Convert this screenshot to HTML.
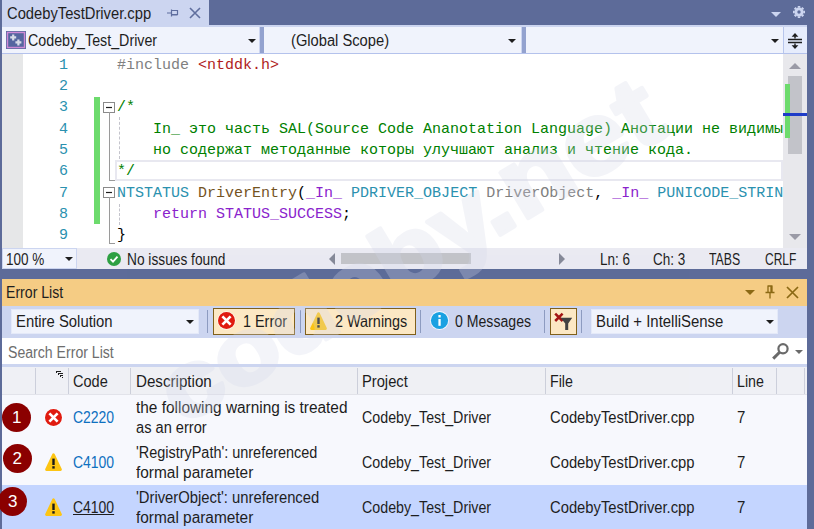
<!DOCTYPE html>
<html>
<head>
<meta charset="utf-8">
<style>
*{box-sizing:border-box;margin:0;padding:0}
html,body{width:814px;height:529px;overflow:hidden;background:#5d6b99}
body{position:relative;font-family:"Liberation Sans",sans-serif;font-size:16px;color:#1e1e1e}
.abs{position:absolute}
.t{position:absolute;white-space:nowrap;line-height:20px;transform-origin:0 50%}
#tab{left:2px;top:0;width:207px;height:26px;background:#ccd5f0}
#nav{left:2px;top:25px;width:805px;height:29px;background:#ccd5f0;border-bottom:1px solid #b4c2ec}
.dd{position:absolute;top:2px;height:26px;background:#f0f3fc}
#ed{left:2px;top:54px;width:781px;height:194px;background:#fff;overflow:hidden}
#gut{left:0;top:0;width:21px;height:194px;background:#e6e7e8}
.ln{position:absolute;left:46px;width:20px;text-align:right;font-family:"Liberation Mono",monospace;font-size:15px;color:#2b91af;line-height:21px;white-space:nowrap}
.cl{position:absolute;left:115px;font-family:"Liberation Mono",monospace;font-size:15px;line-height:21px;white-space:pre;color:#000}
.g{color:#008000}.gr{color:#808080}.r{color:#b01c1c}.b{color:#2b91af}.p{color:#8a22cc}.m{color:#8a22cc}.pa{color:#808080}.fn{color:#74531f}
#vs{left:783px;top:54px;width:24px;height:194px;background:#e8e8ec}
#st{left:2px;top:248px;width:805px;height:21px;background:#eaeaf2}
#elh{left:2px;top:279px;width:805px;height:27px;background:#f5cc84}
#tb{left:2px;top:306px;width:805px;height:33px;background:#ccd5f0}
#sr{left:2px;top:338px;width:805px;height:26px;background:#fff}
#ch{left:2px;top:364px;width:805px;height:31px;background:#eff0f5;border-top:3px solid #ccd5f0;border-bottom:1px solid #e2e3ea}
#rows{left:2px;top:395px;width:805px;height:134px;background:#f7f8fd}
.row{position:absolute;left:0;width:805px;height:45px}
.sel{background:#c4d5ff}
.circ{position:absolute;width:29px;height:29px;border-radius:15px;background:#8b0000;color:#fff;text-align:center;line-height:29px;font-size:17px}
.btn{position:absolute;top:2px;height:27px;background:#fce8c4;border:1px solid #80601c}
.sep{position:absolute;top:4px;width:1px;height:23px;background:#8e9bc0}
.cs{position:absolute;top:1px;width:1px;height:26px;background:#cccfdb}
.arr{position:absolute;width:0;height:0;border-left:4px solid transparent;border-right:4px solid transparent;border-top:4px solid #1e1e1e}
</style>
</head>
<body>
<div class="arr" style="left:771px;top:12px;border-left-width:5px;border-right-width:5px;border-top:5px solid #ccd5f0"></div>
<svg class="abs" style="left:792px;top:5px" width="14" height="14" viewBox="0 0 14 14"><g fill="none" stroke="#ccd5f0"><circle cx="7" cy="7" r="3.1" stroke-width="2.8"/><path d="M11.20 7.00L13.00 7.00M9.97 9.97L11.24 11.24M7.00 11.20L7.00 13.00M4.03 9.97L2.76 11.24M2.80 7.00L1.00 7.00M4.03 4.03L2.76 2.76M7.00 2.80L7.00 1.00M9.97 4.03L11.24 2.76" stroke-width="2.5"/></g></svg>
<div id="tab" class="abs"><span class="t" style="left:5px;top:4px;transform:scaleX(0.9206);">CodebyTestDriver.cpp</span>
<svg class="abs" style="left:165px;top:8px" width="12" height="10" viewBox="0 0 12 10"><path d="M0 5H4M4.5 1.5V8.5M4.5 2.5H10.5V6.5H4.5M4.5 7H10.5" fill="none" stroke="#5f6e9e" stroke-width="1.2"/></svg>
<svg class="abs" style="left:187px;top:7px" width="12" height="12" viewBox="0 0 12 12"><path d="M1 1L11 11M11 1L1 11" stroke="#5f6e9e" stroke-width="1.6"/></svg>
</div>
<div id="nav" class="abs">
<div class="dd" style="left:0;width:257px"><span class="t" style="left:26px;top:4px;transform:scaleX(0.8906);">Codeby_Test_Driver</span><div class="arr" style="left:246px;top:12px"></div>
<svg class="abs" style="left:4px;top:4px" width="20" height="18" viewBox="0 0 20 18"><rect x="0" y="0" width="20" height="18" fill="#5b6aa0"/><rect x="1.5" y="1.5" width="17" height="15" fill="#5566a0" stroke="#cf8ad6" stroke-width="1.4"/><path d="M7.2 3.4v6M4.2 6.4h6" stroke="#d8dce8" stroke-width="2.2"/><path d="M12.4 8.4v6M9.4 11.4h6" stroke="#d8dce8" stroke-width="2.2"/></svg></div>
<div class="abs" style="left:258px;top:2px;width:4px;height:26px;background:#93a2cf"></div>
<div class="dd" style="left:262px;width:257px"><span class="t" style="left:27px;top:4px;transform:scaleX(0.9187);">(Global Scope)</span><div class="arr" style="left:244px;top:12px"></div></div>
<div class="abs" style="left:520px;top:2px;width:4px;height:26px;background:#93a2cf"></div>
<div class="dd" style="left:524px;width:257px"><div class="arr" style="left:245px;top:12px"></div></div>
<div class="abs" style="left:781px;top:2px;width:24px;height:26px;background:#e6ecfc;border-left:1px solid #b8c6ec"></div>
<svg class="abs" style="left:785px;top:8px" width="16" height="17" viewBox="0 0 16 17"><path d="M1 6.4H15M1 9.6H15" stroke="#1e1e1e" stroke-width="1.5"/><path d="M8 2V5.5M8 10.5V14" stroke="#1e1e1e" stroke-width="1.4"/><path d="M4.6 3.8L8 0L11.4 3.8ZM4.6 12.2L8 16L11.4 12.2Z" fill="#1e1e1e"/></svg>
</div>
<div id="ed" class="abs"><div id="gut" class="abs"></div>
<div class="abs" style="left:92px;top:43px;width:6px;height:127px;background:#6ddb6d"></div>
<div class="abs" style="left:113px;top:106px;width:668px;height:21px;border:2px solid #e8e8f0"></div>
<div class="ln" style="top:1px">1</div>
<div class="ln" style="top:22px">2</div>
<div class="ln" style="top:43px">3</div>
<div class="ln" style="top:65px">4</div>
<div class="ln" style="top:86px">5</div>
<div class="ln" style="top:107px">6</div>
<div class="ln" style="top:129px">7</div>
<div class="ln" style="top:150px">8</div>
<div class="ln" style="top:171px">9</div>
<div class="cl" style="top:1px"><span class="gr">#include </span><span class="r">&lt;ntddk.h&gt;</span></div>
<div class="cl" style="top:22px"></div>
<div class="cl" style="top:43px"><span class="g">/*</span></div>
<div class="cl" style="top:65px"><span class="g">    In_ это часть SAL(Source Code Ananotation Language) Анотации не видимы</span></div>
<div class="cl" style="top:86px"><span class="g">    но содержат методанные которы улучшают анализ и чтение кода.</span></div>
<div class="cl" style="top:107px"><span class="g">*/</span></div>
<div class="cl" style="top:129px"><span class="b">NTSTATUS</span> <span class="fn">DriverEntry</span>(<span class="m">_In_</span> <span class="b">PDRIVER_OBJECT</span> <span class="pa">DriverObject</span>, <span class="m">_In_</span> <span class="b">PUNICODE_STRING</span></div>
<div class="cl" style="top:150px">    <span class="p">return</span> <span class="m">STATUS_SUCCESS</span>;</div>
<div class="cl" style="top:171px">}</div>
<svg class="abs" style="left:101px;top:48px" width="12" height="11" viewBox="0 0 12 11"><rect x="0.5" y="0.5" width="11" height="10" fill="#fff" stroke="#8a8a8a"/><path d="M3 5.5H9" stroke="#1e1e1e" stroke-width="1.2"/></svg>
<svg class="abs" style="left:101px;top:133px" width="12" height="11" viewBox="0 0 12 11"><rect x="0.5" y="0.5" width="11" height="10" fill="#fff" stroke="#8a8a8a"/><path d="M3 5.5H9" stroke="#1e1e1e" stroke-width="1.2"/></svg>
<div class="abs" style="left:107px;top:58px;width:1px;height:69px;background:#9a9a9a"></div>
<div class="abs" style="left:107px;top:126px;width:6px;height:1px;background:#9a9a9a"></div>
<div class="abs" style="left:107px;top:143px;width:1px;height:47px;background:#9a9a9a"></div>
<div class="abs" style="left:107px;top:189px;width:6px;height:1px;background:#9a9a9a"></div>
<div class="abs" style="left:117px;top:63px;width:0;height:42px;border-left:1px dashed #c4c4cc"></div>
<div class="abs" style="left:117px;top:150px;width:0;height:21px;border-left:1px dashed #c4c4cc"></div>
</div>
<div id="vs" class="abs">
<div class="abs" style="left:5px;top:22px;width:14px;height:78px;background:#c2c3c9"></div>
<div class="abs" style="left:2px;top:30px;width:5px;height:54px;background:#6ddb6d"></div>
<div class="abs" style="left:0;top:59px;width:24px;height:3px;background:#1e3cc8"></div>
<div class="abs" style="left:6px;top:9px;width:0;height:0;border-left:6px solid transparent;border-right:6px solid transparent;border-bottom:6px solid #9a9aa6"></div>
<div class="abs" style="left:6px;top:180px;width:0;height:0;border-left:6px solid transparent;border-right:6px solid transparent;border-top:6px solid #9a9aa6"></div>
</div>
<div id="st" class="abs">
<div class="abs" style="left:0;top:0;width:75px;height:21px;background:#f0f3fc;border:1px solid #ccd5f0"></div>
<span class="t" style="left:4px;top:2px;transform:scaleX(0.8438);">100 %</span><div class="arr" style="left:63px;top:9px"></div>
<svg class="abs" style="left:105px;top:4px" width="14" height="14" viewBox="0 0 14 14"><circle cx="7" cy="7" r="7" fill="#2ea043"/><path d="M3.5 7.2L6 9.7L10.5 4.6" fill="none" stroke="#fff" stroke-width="1.8"/></svg>
<span class="t" style="left:125px;top:2px;transform:scaleX(0.8578);">No issues found</span>
<div class="abs" style="left:339px;top:5px;width:130px;height:11px;background:#c2c3c9"></div>
<div class="abs" style="left:327px;top:5px;width:0;height:0;border-top:6px solid transparent;border-bottom:6px solid transparent;border-right:6px solid #868999"></div>
<div class="abs" style="left:557px;top:5px;width:0;height:0;border-top:6px solid transparent;border-bottom:6px solid transparent;border-left:6px solid #868999"></div>
<span class="t" style="left:598px;top:2px;transform:scaleX(0.8438);">Ln: 6</span><span class="t" style="left:651px;top:2px;transform:scaleX(0.8438);">Ch: 3</span><span class="t" style="left:707px;top:2px;transform:scaleX(0.7687);">TABS</span><span class="t" style="left:763px;top:2px;transform:scaleX(0.75);">CRLF</span>
</div>
<div id="elh" class="abs"><span class="t" style="left:4px;top:4px;transform:scaleX(0.8812);">Error List</span>
<div class="arr" style="left:743px;top:11px;border-left-width:5px;border-right-width:5px;border-top:5px solid #8b6914"></div>
<svg class="abs" style="left:763px;top:6px" width="10" height="14" viewBox="0 0 10 14"><path d="M2.5 1H7.5M3 1V7M7 1V7M6 1V7M0.5 7.5H9.5M5 8V13.5" fill="none" stroke="#8b6914" stroke-width="1.3"/></svg>
<svg class="abs" style="left:784px;top:7px" width="13" height="13" viewBox="0 0 13 13"><path d="M1 1L12 12M12 1L1 12" stroke="#8b6914" stroke-width="1.7"/></svg>
</div>
<div id="tb" class="abs">
<div class="abs" style="left:9px;top:3px;width:188px;height:25px;background:#f0f3fc;border:1px solid #e4e9f8"></div><span class="t" style="left:14px;top:6px;transform:scaleX(0.9281);">Entire Solution</span><div class="arr" style="left:184px;top:14px"></div>
<div class="sep" style="left:205px"></div>
<div class="btn" style="left:211px;width:82px"></div><svg class="abs" style="left:215px;top:5px" width="19" height="19" viewBox="0 0 19 19"><circle cx="9.5" cy="9.5" r="9.3" fill="#fff" opacity="0.75"/><circle cx="9.5" cy="9.5" r="8.5" fill="#e01b10"/><path d="M5.4 5.4L13.6 13.6M13.6 5.4L5.4 13.6" stroke="#fff" stroke-width="2.7"/></svg><span class="t" style="left:241px;top:6px;transform:scaleX(0.9);">1 Error</span>
<div class="sep" style="left:298px"></div>
<div class="btn" style="left:303px;width:111px"></div><svg class="abs" style="left:307px;top:5px" width="19" height="20" viewBox="0 0 19 20"><path d="M9.5 2.6L16.6 17.6H2.4Z" fill="#fdc514" stroke="#fdc514" stroke-width="2.6" stroke-linejoin="round"/><rect x="8.3" y="6.6" width="2.4" height="6.4" fill="#1a1a1a"/><rect x="8.3" y="14.2" width="2.4" height="2.4" fill="#1a1a1a"/></svg><span class="t" style="left:333px;top:6px;transform:scaleX(0.9);">2 Warnings</span>
<div class="sep" style="left:418px"></div>
<svg class="abs" style="left:428px;top:5px" width="19" height="19" viewBox="0 0 19 19"><circle cx="9.5" cy="9.5" r="9.5" fill="#fff" opacity="0.8"/><circle cx="9.5" cy="9.5" r="8.6" fill="#1ba1e2"/><rect x="8.4" y="8" width="2.3" height="6.8" fill="#fff"/><rect x="8.4" y="4" width="2.3" height="2.5" fill="#fff"/></svg><span class="t" style="left:453px;top:6px;transform:scaleX(0.8812);">0 Messages</span>
<div class="sep" style="left:542px"></div>
<div class="btn" style="left:548px;width:27px"></div>
<svg class="abs" style="left:551px;top:5px" width="22" height="21" viewBox="0 0 22 21"><path d="M2.2 2.6L9.6 10M9.6 2.6L2.2 10" stroke="#a31515" stroke-width="2.5"/><path d="M7.6 6.8H19.2L15.2 12.6V18.9H12.2V12.6Z" fill="#424242"/></svg>
<div class="sep" style="left:579px"></div>
<div class="abs" style="left:589px;top:3px;width:187px;height:25px;background:#f0f3fc;border:1px solid #e4e9f8"></div><span class="t" style="left:594px;top:6px;transform:scaleX(0.9328);">Build + IntelliSense</span><div class="arr" style="left:764px;top:14px"></div>
</div>
<div id="sr" class="abs"><span class="t" style="left:6px;top:5px;transform:scaleX(0.8812);color:#6d6d6d">Search Error List</span>
<svg class="abs" style="left:769px;top:4px" width="20" height="20" viewBox="0 0 20 20"><circle cx="12" cy="6.8" r="4.6" fill="none" stroke="#6a6a6a" stroke-width="2.2"/><path d="M8.6 10.2L2.2 16.6" stroke="#6a6a6a" stroke-width="3"/></svg>
<div class="arr" style="left:793px;top:12px;border-top-color:#6a6a6a"></div>
</div>
<div id="ch" class="abs">
<div class="cs" style="left:33px"></div>
<div class="cs" style="left:66px"></div>
<div class="cs" style="left:128px"></div>
<div class="cs" style="left:355px"></div>
<div class="cs" style="left:543px"></div>
<div class="cs" style="left:730px"></div>
<div class="cs" style="left:774px"></div>
<div class="cs" style="left:802px"></div>
<span class="t" style="left:71px;top:5px;transform:scaleX(0.9094);">Code</span><span class="t" style="left:134px;top:5px;transform:scaleX(0.9469);">Description</span><span class="t" style="left:360px;top:5px;transform:scaleX(0.9187);">Project</span><span class="t" style="left:548px;top:5px;transform:scaleX(0.8906);">File</span><span class="t" style="left:735px;top:5px;transform:scaleX(0.8906);">Line</span>
<svg class="abs" style="left:54px;top:4px" width="8" height="8" viewBox="0 0 8 8"><path d="M0 0.5H5M2 2.5H7M4 4.5H7M6 6.5H7" stroke="#1e1e1e" stroke-width="1"/><path d="M0.5 0V2M2.5 2V4M4.5 4V6" stroke="#1e1e1e" stroke-width="1"/></svg>
</div>
<div id="rows" class="abs">
<div class="row" style="top:0px">
<svg class="abs" style="left:42px;top:13px" width="19" height="19" viewBox="0 0 19 19"><circle cx="9.5" cy="9.5" r="9.3" fill="#fff" opacity="0.75"/><circle cx="9.5" cy="9.5" r="8.5" fill="#e01b10"/><path d="M5.4 5.4L13.6 13.6M13.6 5.4L5.4 13.6" stroke="#fff" stroke-width="2.7"/></svg>
<span class="t" style="left:71px;top:13px;transform:scaleX(0.8719);color:#0e70c0">C2220</span>
<span class="t" style="left:134px;top:3px;transform:scaleX(0.9628);">the following warning is treated</span><span class="t" style="left:134px;top:23px;transform:scaleX(0.9141);">as an error</span>
<span class="t" style="left:360px;top:13px;transform:scaleX(0.8906);">Codeby_Test_Driver</span><span class="t" style="left:548px;top:13px;transform:scaleX(0.9234);">CodebyTestDriver.cpp</span><span class="t" style="left:735px;top:13px;transform:scaleX(0.9375);">7</span>
</div>
<div class="row" style="top:45px">
<svg class="abs" style="left:42px;top:12px" width="19" height="20" viewBox="0 0 19 20"><path d="M9.5 2.6L16.6 17.6H2.4Z" fill="#fdc514" stroke="#fdc514" stroke-width="2.6" stroke-linejoin="round"/><rect x="8.3" y="6.6" width="2.4" height="6.4" fill="#1a1a1a"/><rect x="8.3" y="14.2" width="2.4" height="2.4" fill="#1a1a1a"/></svg>
<span class="t" style="left:71px;top:13px;transform:scaleX(0.8719);color:#0e70c0">C4100</span>
<span class="t" style="left:134px;top:3px;transform:scaleX(0.9028);">'RegistryPath': unreferenced</span><span class="t" style="left:134px;top:23px;transform:scaleX(0.9628);">formal parameter</span>
<span class="t" style="left:360px;top:13px;transform:scaleX(0.8906);">Codeby_Test_Driver</span><span class="t" style="left:548px;top:13px;transform:scaleX(0.9234);">CodebyTestDriver.cpp</span><span class="t" style="left:735px;top:13px;transform:scaleX(0.9375);">7</span>
</div>
<div class="row sel" style="top:90px">
<svg class="abs" style="left:42px;top:12px" width="19" height="20" viewBox="0 0 19 20"><path d="M9.5 2.6L16.6 17.6H2.4Z" fill="#fdc514" stroke="#fdc514" stroke-width="2.6" stroke-linejoin="round"/><rect x="8.3" y="6.6" width="2.4" height="6.4" fill="#1a1a1a"/><rect x="8.3" y="14.2" width="2.4" height="2.4" fill="#1a1a1a"/></svg>
<span class="t" style="left:71px;top:13px;transform:scaleX(0.8719);color:#1e1e1e;text-decoration:underline">C4100</span>
<span class="t" style="left:134px;top:3px;transform:scaleX(0.9244);">'DriverObject': unreferenced</span><span class="t" style="left:134px;top:23px;transform:scaleX(0.9628);">formal parameter</span>
<span class="t" style="left:360px;top:13px;transform:scaleX(0.8906);">Codeby_Test_Driver</span><span class="t" style="left:548px;top:13px;transform:scaleX(0.9234);">CodebyTestDriver.cpp</span><span class="t" style="left:735px;top:13px;transform:scaleX(0.9375);">7</span>
</div>
</div>
<div class="circ" style="left:2.2px;top:402.9px">1</div>
<div class="circ" style="left:2.8px;top:444.2px">2</div>
<div class="circ" style="left:-1.9px;top:486.9px">3</div>
<svg class="abs" style="left:0;top:0;pointer-events:none" width="814" height="529" viewBox="0 0 814 529"><clipPath id="wmc"><rect x="0" y="0" width="814" height="279"/><rect x="0" y="306" width="814" height="223"/></clipPath><g clip-path="url(#wmc)"><g opacity="0.27" transform="translate(506.5 231.2) rotate(-31) scale(1.15 1)" font-family="Liberation Sans" font-weight="bold" font-size="93" fill="#d4d7e8" stroke="#d4d7e8" stroke-width="4" stroke-linejoin="round"><text x="-3.9000000000000004" y="0" text-anchor="end">codeby</text><text x="-12.9" y="0" font-size="101">.net</text></g></g></svg>
</body>
</html>
